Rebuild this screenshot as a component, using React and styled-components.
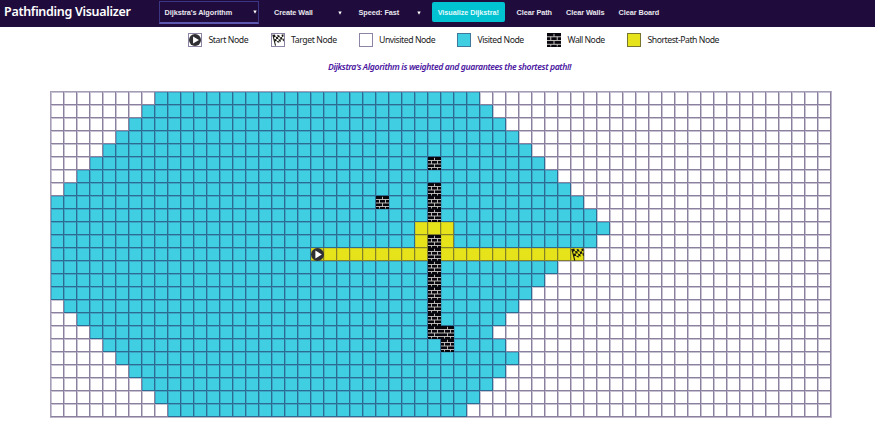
import React from "react";
import styled, { createGlobalStyle, css } from "styled-components";

const GlobalStyle = createGlobalStyle`
  * { box-sizing: border-box; }
  body { margin: 0; background: #fff; overflow: hidden; }
`;

const Page = styled.div`
  width: 875px;
  height: 444px;
  display: flex;
  flex-direction: column;
  align-items: flex-start;
  font-family: "Noto Sans", sans-serif;
  color: #222;
  white-space: nowrap;
`;

const NavBar = styled.nav`
  width: 100%;
  height: 27px;
  flex: none;
  display: flex;
  align-items: flex-start;
  padding: 1px 0 0 4px;
  background: #1f0c3c;
`;

const Brand = styled.h1`
  width: 155px;
  margin: 0;
  font-size: 12.5px;
  line-height: 22px;
  font-weight: 600;
  letter-spacing: -0.31px;
  color: #fff;
`;

const NavItem = styled.button`
  width: ${(p) => p.$width}px;
  height: ${(p) => (p.$open ? 23 : 20)}px;
  margin: ${(p) => (p.$open ? 0 : 1)}px ${(p) => p.$gap || 0}px 0 0;
  padding: ${(p) => (p.$open ? 0 : 1)}px ${(p) => (p.$open ? 1 : 0)}px 0 ${(p) => p.$inset || 0}px;
  flex: none;
  display: flex;
  align-items: center;
  justify-content: ${(p) => (p.$center ? "center" : "space-between")};
  border: 0;
  border-radius: ${(p) => (p.$primary ? 2 : 0)}px;
  background: ${(p) => (p.$primary ? "#00c2d1" : "transparent")};
  color: ${(p) => (p.$primary ? "#e2fbfc" : "#e9e6ee")};
  font: bold 7.3px "Liberation Sans", sans-serif;
  letter-spacing: -0.06px;
  ${(p) =>
    p.$open &&
    css`
      border: 1px solid #3c3584;
      border-bottom: 2px solid #5c58b0;
    `}
`;

const Caret = styled.svg`
  width: 4px;
  height: 4px;
  fill: #fff;
`;

const Legend = styled.ul`
  display: flex;
  height: 26px;
  flex: none;
  margin: 0;
  padding: 0 0 0 188px;
  list-style: none;
`;

const LegendItem = styled.li`
  width: ${(p) => p.$width}px;
  display: flex;
  align-items: center;
  gap: 6.5px;
  font-size: 8.7px;
  letter-spacing: ${(p) => p.$spacing}px;
`;

const fills = { empty: "#fff", visited: "#40cee3", path: "#e6e31a", wall: "#08060d" };
const swatchEdges = { empty: "#8d83a5", visited: "#3e789b", path: "#77742f", wall: "#08060d" };

const Swatch = styled.span`
  width: 14px;
  height: 14px;
  flex: none;
  display: flex;
  border: ${(p) => (p.$kind === "wall" ? 0 : 1)}px solid ${(p) => swatchEdges[p.$kind]};
  background: ${(p) => fills[p.$kind]};
`;

const Message = styled.p`
  width: 100%;
  height: 39px;
  margin: 0;
  padding-left: 24px;
  font-size: 8.7px;
  font-style: italic;
  font-weight: 600;
  letter-spacing: -0.39px;
  line-height: 28px;
  text-align: center;
  color: #4a14a0;
`;

const Board = styled.div`
  display: grid;
  grid-template-columns: repeat(60, 13px);
  grid-template-rows: repeat(25, 13px);
  margin-left: 50px;
  border: 1px solid #bdb7ca;
  border-top-color: #a59db5;
  border-left-color: #a59db5;
  margin-top: -1px;
`;

const edges = {
  empty: ["#c8c3d3", "#8b819f"],
  visited: ["#3ba6c6", "#2c6c92"],
  path: ["#cfcb1c", "#858128"],
};

const Cell = styled.div`
  display: flex;
  background: ${(p) => fills[p.$kind]};
  ${(p) =>
    edges[p.$kind] &&
    css`
      box-shadow: inset -1px -1px 0 ${edges[p.$kind][1]}, inset 1px 1px 0 ${edges[p.$kind][0]};
    `}
`;

const Glyph = styled.svg`
  width: 100%;
  height: 100%;
  display: block;
`;

const StartIcon = () => (
  <Glyph viewBox="0 0 13 13">
    <circle cx="6.5" cy="6.5" r="6.5" fill="#2f2f33" />
    <path d="M4.4 2.6v7.8l6.4-3.9z" fill="#fff" />
  </Glyph>
);

const FlagIcon = () => (
  <Glyph viewBox="0 0 13 13">
    <path d="M.8.8 3.8 12.6" stroke="#17170f" strokeWidth="1.1" />
    <path
      d="M1 1.2 3.2.5 4 3 1.7 3.8zM5.6.9 8 1.5 8.6 3.8 6.2 3.2zM10.3.9 12.4.3 12.6 2.7 10.8 3.3zM4 3 6.2 3.2 6.9 5.5 4.6 5.4zM8.6 3.8 10.8 3.3 11.4 5.6 9.2 6.2zM2.3 5.7 4.6 5.4 5.2 7.7 3 8.2zM6.9 5.5 9.2 6.2 9.8 8.5 7.5 7.9zM11.4 5.6 12.8 5 12.9 7.4 12 8.1zM5.2 7.7 7.5 7.9 8 9.5 5.8 9z"
      fill="#17170f"
    />
  </Glyph>
);

const WallIcon = () => (
  <Glyph viewBox="0 0 13 13">
    <path
      d="M0 3.5h13M0 7h13M0 10.5h13M6.5 .8v2.7M3.5 3.5V7M9.5 3.5V7M6.5 7v3.5M3.5 10.5v2M9.5 10.5v2"
      fill="none"
      stroke="#c9c6c2"
      strokeWidth=".9"
    />
  </Glyph>
);

const icons = { start: <StartIcon />, target: <FlagIcon />, wall: <WallIcon /> };

const menus = [
  { label: "Dijkstra's Algorithm", width: 100, inset: 4.5, gap: 15, open: true },
  { label: "Create Wall", width: 68, gap: 16.5 },
  { label: "Speed: Fast", width: 62, gap: 11.5 },
];

const legend = [
  { label: "Start Node", kind: "empty", icon: "start", width: 82.5, spacing: -0.42 },
  { label: "Target Node", kind: "empty", icon: "target", width: 88, spacing: -0.42 },
  { label: "Unvisited Node", kind: "empty", width: 98.5, spacing: -0.45 },
  { label: "Visited Node", kind: "visited", width: 90, spacing: -0.44 },
  { label: "Wall Node", kind: "wall", icon: "wall", width: 80, spacing: -0.5 },
  { label: "Shortest-Path Node", kind: "path", width: 100, spacing: -0.48 },
];

// First visited column and the column just past the last one, per row.
const visitedSpans = [
  [8, 33], [7, 34], [6, 35], [5, 36], [4, 37], [3, 38], [2, 39], [1, 40],
  [0, 41], [0, 42], [0, 43], [0, 42], [0, 41], [0, 39], [0, 38], [0, 37],
  [1, 36], [2, 35], [3, 34], [4, 35], [5, 36], [6, 35], [7, 34], [8, 33], [9, 32],
];

const walls = new Set([
  "5:29", "7:29", "8:29", "9:29", "8:25", "11:29", "12:29", "13:29", "14:29",
  "15:29", "16:29", "17:29", "18:29", "18:30", "19:30",
]);

const detour = new Set(["10:28", "10:29", "10:30", "11:28", "11:30"]);

function kindOf(row, col) {
  const key = `${row}:${col}`;
  if (walls.has(key)) return "wall";
  if (detour.has(key) || (row === 12 && col >= 20 && col <= 40)) return "path";
  const [from, to] = visitedSpans[row];
  return col >= from && col < to ? "visited" : "empty";
}

function iconOf(row, col, kind) {
  if (kind === "wall") return icons.wall;
  if (row === 12 && col === 20) return icons.start;
  if (row === 12 && col === 40) return icons.target;
  return null;
}

const cells = visitedSpans.flatMap((_, row) =>
  Array.from({ length: 60 }, (_, col) => {
    const kind = kindOf(row, col);
    return { id: `${row}:${col}`, kind, icon: iconOf(row, col, kind) };
  })
);

export default function App() {
  return (
    <Page>
      <GlobalStyle />
      <NavBar>
        <Brand>Pathfinding Visualizer</Brand>
        {menus.map((m) => (
          <NavItem key={m.label} $width={m.width} $inset={m.inset} $gap={m.gap} $open={m.open}>
            {m.label}
            <Caret viewBox="0 0 4 4"><path d="M.3.5h3.4L2 3.8z" /></Caret>
          </NavItem>
        ))}
        <NavItem $primary $center $width={72.5} $gap={12}>Visualize Dijkstra!</NavItem>
        <NavItem $width={35} $gap={14.5}>Clear Path</NavItem>
        <NavItem $width={38} $gap={14.5}>Clear Walls</NavItem>
        <NavItem $width={40}>Clear Board</NavItem>
      </NavBar>
      <Legend>
        {legend.map((l) => (
          <LegendItem key={l.label} $width={l.width} $spacing={l.spacing}>
            <Swatch $kind={l.kind}>{icons[l.icon]}</Swatch>
            <span>{l.label}</span>
          </LegendItem>
        ))}
      </Legend>
      <Message>Dijkstra's Algorithm is weighted and guarantees the shortest path!!</Message>
      <Board>
        {cells.map((c) => (
          <Cell key={c.id} $kind={c.kind}>{c.icon}</Cell>
        ))}
      </Board>
    </Page>
  );
}
